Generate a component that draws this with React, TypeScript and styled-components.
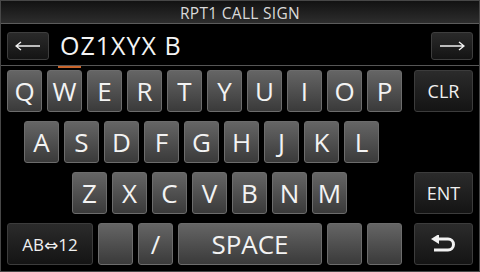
import styled, { createGlobalStyle } from "styled-components";

const Global = createGlobalStyle`
  html, body {
    margin: 0;
    padding: 0;
    background: #000;
  }
  * {
    box-sizing: border-box;
  }
`;

const Screen = styled.div`
  width: 480px;
  height: 272px;
  border: 1px solid #474747;
  background: #000;
  display: flex;
  flex-direction: column;
  font-family: "Open Sans", "DejaVu Sans", sans-serif;
  color: #f2f2f2;
  overflow: hidden;
`;

const TitleBar = styled.div`
  height: 23px;
  border-bottom: 1px solid #5c5c5c;
  background: linear-gradient(#121212, #2d2d2d);
  display: flex;
  align-items: center;
  justify-content: center;
  font-size: 15.5px;
  letter-spacing: 0.3px;
  color: #dadada;
  padding-top: 1px;
`;

const InputRow = styled.div`
  height: 42px;
  border-bottom: 1px solid #565656;
  display: flex;
  align-items: center;
  padding: 0 6px;
`;

const NavButton = styled.button`
  width: 42px;
  height: 28px;
  border: 1px solid #3e3e3e;
  border-radius: 3px;
  background: linear-gradient(#2a2a2a, #141414);
  display: flex;
  align-items: center;
  justify-content: center;
  padding: 0;
  margin-top: 2px;
`;

const Entry = styled.div`
  flex: 1;
  font-size: 25px;
  line-height: 1;
  letter-spacing: 1px;
  padding-left: 11px;
  margin-top: 1px;
  color: #f4f4f4;
`;

const Cursor = styled.span`
  position: relative;

  &::after {
    content: "";
    position: absolute;
    left: -2px;
    right: -1px;
    bottom: -6px;
    height: 2px;
    background: #c9652c;
  }
`;

const Keyboard = styled.div`
  flex: 1;
  display: flex;
  flex-direction: column;
  gap: 9px;
  padding: 4px 6px 0 6px;
`;

const Row = styled.div<{ $indent?: number }>`
  height: 42px;
  display: flex;
  gap: 5px;
  padding-left: ${(p) => p.$indent ?? 0}px;
`;

const Key = styled.div<{ $w?: number }>`
  width: ${(p) => p.$w ?? 35}px;
  height: 100%;
  border: 1px solid #6c6c6c;
  border-radius: 3px;
  background: linear-gradient(#656565, #3a3a3a);
  display: flex;
  align-items: center;
  justify-content: center;
  font-size: 26px;
  color: #f3f3f3;
`;

const FnKey = styled.div<{ $w?: number; $size?: number }>`
  width: ${(p) => p.$w ?? 59}px;
  height: 100%;
  border: 1px solid #3c3c3c;
  border-radius: 3px;
  background: linear-gradient(#2b2b2b, #141414);
  display: flex;
  align-items: center;
  justify-content: center;
  font-size: ${(p) => p.$size ?? 18}px;
  color: #f0f0f0;
`;

const SideKey = styled(FnKey)`
  margin-left: auto;
`;

function LeftArrow() {
  return (
    <svg width="26" height="10" viewBox="0 0 26 10">
      <path d="M1 5 H25 M6 1 L1 5 L6 9" stroke="#f0f0f0" strokeWidth="1.4" fill="none" />
    </svg>
  );
}

function RightArrow() {
  return (
    <svg width="26" height="10" viewBox="0 0 26 10">
      <path d="M1 5 H25 M20 1 L25 5 L20 9" stroke="#f0f0f0" strokeWidth="1.4" fill="none" />
    </svg>
  );
}

function ReturnIcon() {
  return (
    <svg width="26" height="18" viewBox="0 0 26 18">
      <path d="M6 4 H17 A5.5 5.5 0 0 1 17 15 H3" stroke="#f2f2f2" strokeWidth="3" fill="none" />
      <polygon points="0,4 8,-1 8,9" fill="#f2f2f2" />
    </svg>
  );
}

const row1 = ["Q", "W", "E", "R", "T", "Y", "U", "I", "O", "P"];
const row2 = ["A", "S", "D", "F", "G", "H", "J", "K", "L"];
const row3 = ["Z", "X", "C", "V", "B", "N", "M"];

export default function App() {
  return (
    <>
      <Global />
      <Screen>
        <TitleBar>RPT1 CALL SIGN</TitleBar>
        <InputRow>
          <NavButton>
            <LeftArrow />
          </NavButton>
          <Entry>
            <Cursor>O</Cursor>Z1XYX B
          </Entry>
          <NavButton>
            <RightArrow />
          </NavButton>
        </InputRow>
        <Keyboard>
          <Row>
            {row1.map((k) => (
              <Key key={k}>{k}</Key>
            ))}
            <SideKey>CLR</SideKey>
          </Row>
          <Row $indent={17}>
            {row2.map((k) => (
              <Key key={k}>{k}</Key>
            ))}
          </Row>
          <Row $indent={65}>
            {row3.map((k) => (
              <Key key={k}>{k}</Key>
            ))}
            <SideKey>ENT</SideKey>
          </Row>
          <Row>
            <FnKey $w={86} $size={17}>AB⇔12</FnKey>
            <Key />
            <Key>/</Key>
            <Key $w={144}>SPACE</Key>
            <Key />
            <Key />
            <SideKey>
              <ReturnIcon />
            </SideKey>
          </Row>
        </Keyboard>
      </Screen>
    </>
  );
}
